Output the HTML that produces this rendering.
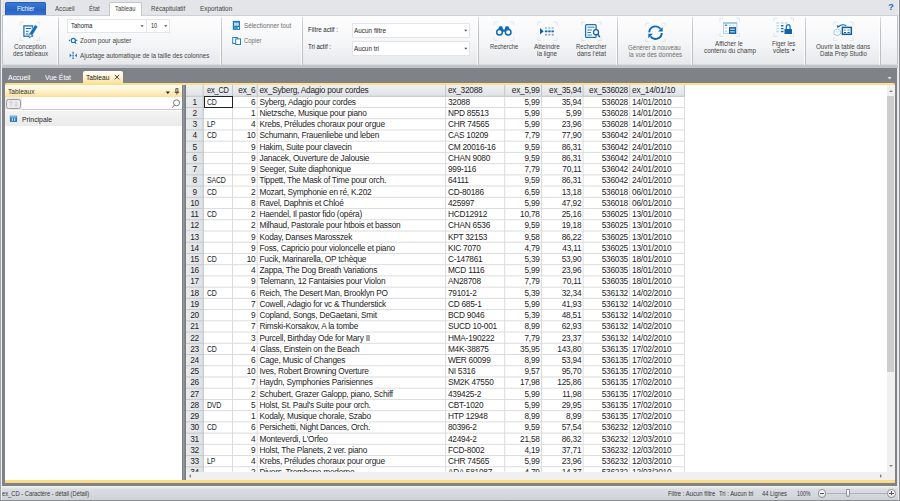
<!DOCTYPE html>
<html lang="fr">
<head>
<meta charset="utf-8">
<title>Tableau</title>
<style>
*{box-sizing:border-box;margin:0;padding:0}
html,body{width:900px;height:501px;overflow:hidden}
body{position:relative;background:#e3e5e8;font-family:"Liberation Sans",sans-serif;font-size:7px;color:#3b3b3b}
.abs{position:absolute}
#winl{left:0;top:0;width:2px;height:501px;background:linear-gradient(90deg,#a0a4a8 0.8px,#eff0f2 0.8px)}
#winr{left:897.8px;top:0;width:2.2px;height:501px;background:linear-gradient(90deg,#eff0f2 1.2px,#8b8f94 1.2px)}
#winb{left:0;top:500px;width:900px;height:1px;background:#8b8f94}
/* ribbon tabs */
.rt{position:absolute;top:2px;height:13px;line-height:13px;text-align:center;font-size:7px;color:#444;white-space:nowrap}
#fichier{left:5px;width:41px;color:#fff;background:linear-gradient(#377ad9,#2a63c0 55%,#2f74dc);border-radius:2px 2px 0 0;border:1px solid #2a5fb5;border-bottom:none;line-height:12px}
#tabact{left:109.2px;width:33px;z-index:1;background:#fdfdfe;border:1px solid #c3c6ca;border-bottom:none;border-radius:2px 2px 0 0;height:14px;line-height:12px}
#help{left:888.300px;top:1.200px;font-size:9px;letter-spacing:-0.500px;line-height:12px;font-weight:bold;color:#1464b4}
/* ribbon */
#ribbon{left:2px;top:14.700px;width:895.8px;height:50.700px;background:linear-gradient(#fdfdfe,#f6f7f8 50%,#e7e9ec);border:1px solid #bfc3c8;border-top-color:#cdd0d4;border-bottom-color:#d9dce0;border-radius:0 0 2px 2px}
.sep{position:absolute;top:16.500px;height:48.500px;width:1px;background:linear-gradient(#d9dbdf,#bcbfc4 30%);box-shadow:-1px 0 0 rgba(255,255,255,.8)}
.t{position:absolute;white-space:nowrap;line-height:10px;height:10px;transform-origin:0 0;z-index:2}
.rc{text-align:center;transform:translateX(-50%)}
.combo{position:absolute;background:#fff;border:1px solid #e3e5e8;height:10px}
.combo span{position:absolute;left:3px;top:0;line-height:8.5px;font-size:6.5px;color:#333}
.combo i{position:absolute;right:3px;top:3.5px;border:1.700px solid transparent;border-top:2.100px solid #444;width:0;height:0}
/* workspace */
#ws{left:2.1px;top:68px;width:895.3px;height:418px;background:#7f8388}
.dt{position:absolute;top:71px;height:12px;line-height:12px;font-size:7.5px;color:#fff;white-space:nowrap}
#dtact{left:82.5px;width:40px;background:linear-gradient(#fffefb,#fdf3d3 50%,#fbe3a0);color:#222;border-radius:2px 2px 0 0;padding-left:3.5px}
#yel{left:5px;top:82.5px;width:890px;height:2.6px;background:#fce08e;border-radius:1.5px 1.5px 0 0}
#yelb{left:5px;top:480px;width:890px;height:2.8px;background:#fbdc85}
/* left panel */
#lp{left:5px;top:85px;width:177.4px;height:395px;background:#fff}
#lph{left:5px;top:85px;width:177.4px;height:12.2px;background:linear-gradient(#fffdf5,#fdefc4 60%,#fbe09a);font-size:7.5px;line-height:12px;padding-left:3px;color:#333}
#lps{left:5px;top:97.2px;width:177.4px;height:13px;background:#fff;border-bottom:1px solid #c9c9c9}
#lpi{left:5px;top:110.5px;width:176.5px;height:15px;background:linear-gradient(#f3f3f3,#ebebeb);font-size:7.5px;line-height:15px;padding-left:16.5px;color:#222}
#split{left:182.5px;top:85px;width:3.3px;height:395px;background:linear-gradient(90deg,#9a9da2,#73777c)}
/* grid */
#grid{left:186px;top:84.9px;width:700.6px;height:386.9px;background:#fff;overflow:hidden;font-size:8.3px;letter-spacing:-0.235px;color:#242424}
.tr{position:absolute;left:0;width:100%;height:11.23px;white-space:nowrap}
.tr>div{position:absolute;top:0;height:11.23px;line-height:10.5px;overflow:hidden;padding:0 2.3px 0 1.8px}
.r{text-align:right}
.c0{left:0;width:17.7px;background:linear-gradient(90deg,#e9ebed,#dfe2e5);text-align:center}
.sq{display:inline-block;transform:scaleX(.84);transform-origin:0 50%}
.c1{padding-left:3px!important;left:17.7px;width:29.3px}
.c2{left:47.0px;width:24.7px}
.c3{left:71.7px;width:188.4px}
.c4{left:260.1px;width:59.1px}
.c5{left:319.2px;width:36.8px}
.c6{left:356.0px;width:41.6px}
.c7{left:397.6px;width:46.7px}
.c8{left:444.3px;width:54.7px}
.th{height:11.87px}
.th>div{height:11.87px;line-height:11.8px;background:linear-gradient(#eef0f2,#dfe2e6)}
#sel{left:203.7px;top:95.9px;width:29.2px;height:11.9px;border:1px solid #222}
#vsb{left:886.6px;top:85px;width:8.4px;height:395px;background:#f0f0f0}
#vth{left:887.3px;top:95.8px;width:6.6px;height:276px;background:#cdcdcd}
#hsb{left:186px;top:471.8px;width:700.6px;height:8.2px;background:#f0f0f0}
.tri{position:absolute;width:0;height:0;border:2.2px solid transparent}
/* status */
#status{left:1px;top:485.8px;width:898px;height:14.2px;background:linear-gradient(#f2f3f5,#d9dce0 25%,#cfd2d7);font-size:6.6px;line-height:13.5px;color:#333}
#status span{position:absolute;white-space:nowrap;top:0}
.circ{position:absolute;width:8.6px;height:8.6px;border-radius:50%;background:linear-gradient(#fff,#e3e5e8);border:1px solid #8d9196}
</style>
</head>
<body>
<!-- ribbon tab strip -->
<div class="rt" id="fichier"></div>
<div class="rt" id="tabact"></div>
<div class="abs" id="help">?</div>

<div class="abs" id="ribbon"></div>
<div class="sep" style="left:57.7px"></div>
<div class="sep" style="left:221.0px"></div>
<div class="sep" style="left:301.8px"></div>
<div class="sep" style="left:478.1px"></div>
<div class="sep" style="left:617.0px"></div>
<div class="sep" style="left:692.0px"></div>
<div class="sep" style="left:804.9px"></div>
<div class="sep" style="left:880.1px"></div>

<!-- group 1 -->

<!-- group 2 -->
<div class="combo" style="left:66.8px;top:19.2px;width:79.9px;height:13.5px"></div>
<div class="combo" style="left:145.7px;top:19.2px;width:24.3px;height:13.5px"></div>

<!-- group 3 -->

<!-- group 4 -->
<div class="combo" style="left:352.3px;top:23.3px;width:117.6px;height:14.6px"></div>
<div class="combo" style="left:352.3px;top:41.4px;width:117.6px;height:14.4px"></div>

<!-- group 5 -->

<!-- group 6 -->

<!-- group 7 -->

<!-- group 8 -->

<!-- workspace -->
<div class="abs" style="left:2px;top:65.400px;width:896px;height:2.800px;background:#c1c4c9"></div>
<div class="abs" id="ws"></div>
<div class="dt" id="dtact"></div>
<div class="abs" id="yel"></div>

<!-- left panel -->
<div class="abs" id="lp"></div>
<div class="abs" id="lph"></div>
<div class="abs" id="lps"></div>
<div class="abs" style="left:5px;top:97.300px;width:17.200px;height:12.800px;background:#ebebeb"></div>
<div class="abs" style="left:6.2px;top:98.800px;width:14.700px;height:10.200px;border:1px solid #9c9c9c;border-radius:2.500px;background:#ececec"></div>
<div class="abs" id="lpi"></div>
<div class="abs" id="split"></div>

<!-- grid -->
<div class="abs" id="grid">
<div class="tr th" style="top:0"><div class="c0"></div><div class="c1"><span class="sq" style="transform:scaleX(.9)">ex_CD</span></div><div class="c2 r">ex_6</div><div class="c3">ex_Syberg, Adagio pour cordes</div><div class="c4">ex_32088</div><div class="c5 r">ex_5,99</div><div class="c6 r">ex_35,94</div><div class="c7 r">ex_536028</div><div class="c8">ex_14/01/10</div></div>
<div class="tr" style="top:11.87px"><div class="c0">1</div><div class="c1"><span class="sq">CD</span></div><div class="c2 r">6</div><div class="c3">Syberg, Adagio pour cordes</div><div class="c4">32088</div><div class="c5 r">5,99</div><div class="c6 r">35,94</div><div class="c7 r">536028</div><div class="c8">14/01/2010</div></div>
<div class="tr" style="top:23.10px"><div class="c0">2</div><div class="c1"></div><div class="c2 r">1</div><div class="c3">Nietzsche, Musique pour piano</div><div class="c4">NPD 85513</div><div class="c5 r">5,99</div><div class="c6 r">5,99</div><div class="c7 r">536028</div><div class="c8">14/01/2010</div></div>
<div class="tr" style="top:34.33px"><div class="c0">3</div><div class="c1"><span class="sq">LP</span></div><div class="c2 r">4</div><div class="c3">Krebs, Préludes choraux pour orgue</div><div class="c4">CHR 74565</div><div class="c5 r">5,99</div><div class="c6 r">23,96</div><div class="c7 r">536028</div><div class="c8">14/01/2010</div></div>
<div class="tr" style="top:45.55px"><div class="c0">4</div><div class="c1"><span class="sq">CD</span></div><div class="c2 r">10</div><div class="c3">Schumann, Frauenliebe und leben</div><div class="c4">CAS 10209</div><div class="c5 r">7,79</div><div class="c6 r">77,90</div><div class="c7 r">536042</div><div class="c8">24/01/2010</div></div>
<div class="tr" style="top:56.78px"><div class="c0">5</div><div class="c1"></div><div class="c2 r">9</div><div class="c3">Hakim, Suite pour clavecin</div><div class="c4">CM 20016-16</div><div class="c5 r">9,59</div><div class="c6 r">86,31</div><div class="c7 r">536042</div><div class="c8">24/01/2010</div></div>
<div class="tr" style="top:68.01px"><div class="c0">6</div><div class="c1"></div><div class="c2 r">9</div><div class="c3">Janacek, Ouverture de Jalousie</div><div class="c4">CHAN 9080</div><div class="c5 r">9,59</div><div class="c6 r">86,31</div><div class="c7 r">536042</div><div class="c8">24/01/2010</div></div>
<div class="tr" style="top:79.24px"><div class="c0">7</div><div class="c1"></div><div class="c2 r">9</div><div class="c3">Seeger, Suite diaphonique</div><div class="c4">999-116</div><div class="c5 r">7,79</div><div class="c6 r">70,11</div><div class="c7 r">536042</div><div class="c8">24/01/2010</div></div>
<div class="tr" style="top:90.47px"><div class="c0">8</div><div class="c1"><span class="sq">SACD</span></div><div class="c2 r">9</div><div class="c3">Tippett, The Mask of Time pour orch.</div><div class="c4">64111</div><div class="c5 r">9,59</div><div class="c6 r">86,31</div><div class="c7 r">536042</div><div class="c8">24/01/2010</div></div>
<div class="tr" style="top:101.69px"><div class="c0">9</div><div class="c1"><span class="sq">CD</span></div><div class="c2 r">2</div><div class="c3">Mozart, Symphonie en ré, K.202</div><div class="c4">CD-80186</div><div class="c5 r">6,59</div><div class="c6 r">13,18</div><div class="c7 r">536018</div><div class="c8">06/01/2010</div></div>
<div class="tr" style="top:112.92px"><div class="c0">10</div><div class="c1"></div><div class="c2 r">8</div><div class="c3">Ravel, Daphnis et Chloé</div><div class="c4">425997</div><div class="c5 r">5,99</div><div class="c6 r">47,92</div><div class="c7 r">536018</div><div class="c8">06/01/2010</div></div>
<div class="tr" style="top:124.15px"><div class="c0">11</div><div class="c1"><span class="sq">CD</span></div><div class="c2 r">2</div><div class="c3">Haendel, Il pastor fido (opéra)</div><div class="c4">HCD12912</div><div class="c5 r">10,78</div><div class="c6 r">25,16</div><div class="c7 r">536025</div><div class="c8">13/01/2010</div></div>
<div class="tr" style="top:135.38px"><div class="c0">12</div><div class="c1"></div><div class="c2 r">2</div><div class="c3">Milhaud, Pastorale pour htbois et basson</div><div class="c4">CHAN 6536</div><div class="c5 r">9,59</div><div class="c6 r">19,18</div><div class="c7 r">536025</div><div class="c8">13/01/2010</div></div>
<div class="tr" style="top:146.61px"><div class="c0">13</div><div class="c1"></div><div class="c2 r">9</div><div class="c3">Koday, Danses Marosszek</div><div class="c4">KPT 32153</div><div class="c5 r">9,58</div><div class="c6 r">86,22</div><div class="c7 r">536025</div><div class="c8">13/01/2010</div></div>
<div class="tr" style="top:157.83px"><div class="c0">14</div><div class="c1"></div><div class="c2 r">9</div><div class="c3">Foss, Capricio pour violoncelle et piano</div><div class="c4">KIC 7070</div><div class="c5 r">4,79</div><div class="c6 r">43,11</div><div class="c7 r">536025</div><div class="c8">13/01/2010</div></div>
<div class="tr" style="top:169.06px"><div class="c0">15</div><div class="c1"><span class="sq">CD</span></div><div class="c2 r">10</div><div class="c3">Fucik, Marinarella, OP tchèque</div><div class="c4">C-147861</div><div class="c5 r">5,39</div><div class="c6 r">53,90</div><div class="c7 r">536035</div><div class="c8">18/01/2010</div></div>
<div class="tr" style="top:180.29px"><div class="c0">16</div><div class="c1"></div><div class="c2 r">4</div><div class="c3">Zappa, The Dog Breath Variations</div><div class="c4">MCD 1116</div><div class="c5 r">5,99</div><div class="c6 r">23,96</div><div class="c7 r">536035</div><div class="c8">18/01/2010</div></div>
<div class="tr" style="top:191.52px"><div class="c0">17</div><div class="c1"></div><div class="c2 r">9</div><div class="c3">Telemann, 12 Fantaisies pour Violon</div><div class="c4">AN28708</div><div class="c5 r">7,79</div><div class="c6 r">70,11</div><div class="c7 r">536035</div><div class="c8">18/01/2010</div></div>
<div class="tr" style="top:202.75px"><div class="c0">18</div><div class="c1"><span class="sq">CD</span></div><div class="c2 r">6</div><div class="c3">Reich, The Desert Man, Brooklyn PO</div><div class="c4">79101-2</div><div class="c5 r">5,39</div><div class="c6 r">32,34</div><div class="c7 r">536132</div><div class="c8">14/02/2010</div></div>
<div class="tr" style="top:213.97px"><div class="c0">19</div><div class="c1"></div><div class="c2 r">7</div><div class="c3">Cowell, Adagio for vc &amp; Thunderstick</div><div class="c4">CD 685-1</div><div class="c5 r">5,99</div><div class="c6 r">41,93</div><div class="c7 r">536132</div><div class="c8">14/02/2010</div></div>
<div class="tr" style="top:225.20px"><div class="c0">20</div><div class="c1"></div><div class="c2 r">9</div><div class="c3">Copland, Songs, DeGaetani, Smit</div><div class="c4">BCD 9046</div><div class="c5 r">5,39</div><div class="c6 r">48,51</div><div class="c7 r">536132</div><div class="c8">14/02/2010</div></div>
<div class="tr" style="top:236.43px"><div class="c0">21</div><div class="c1"></div><div class="c2 r">7</div><div class="c3">Rimski-Korsakov, A la tombe</div><div class="c4">SUCD 10-001</div><div class="c5 r">8,99</div><div class="c6 r">62,93</div><div class="c7 r">536132</div><div class="c8">14/02/2010</div></div>
<div class="tr" style="top:247.66px"><div class="c0">22</div><div class="c1"></div><div class="c2 r">3</div><div class="c3">Purcell, Birthday Ode for Mary II</div><div class="c4">HMA-190222</div><div class="c5 r">7,79</div><div class="c6 r">23,37</div><div class="c7 r">536132</div><div class="c8">14/02/2010</div></div>
<div class="tr" style="top:258.89px"><div class="c0">23</div><div class="c1"><span class="sq">CD</span></div><div class="c2 r">4</div><div class="c3">Glass, Einstein on the Beach</div><div class="c4">M4K-38875</div><div class="c5 r">35,95</div><div class="c6 r">143,80</div><div class="c7 r">536135</div><div class="c8">17/02/2010</div></div>
<div class="tr" style="top:270.11px"><div class="c0">24</div><div class="c1"></div><div class="c2 r">6</div><div class="c3">Cage, Music of Changes</div><div class="c4">WER 60099</div><div class="c5 r">8,99</div><div class="c6 r">53,94</div><div class="c7 r">536135</div><div class="c8">17/02/2010</div></div>
<div class="tr" style="top:281.34px"><div class="c0">25</div><div class="c1"></div><div class="c2 r">10</div><div class="c3">Ives, Robert Browning Overture</div><div class="c4">NI 5316</div><div class="c5 r">9,57</div><div class="c6 r">95,70</div><div class="c7 r">536135</div><div class="c8">17/02/2010</div></div>
<div class="tr" style="top:292.57px"><div class="c0">26</div><div class="c1"></div><div class="c2 r">7</div><div class="c3">Haydn, Symphonies Parisiennes</div><div class="c4">SM2K 47550</div><div class="c5 r">17,98</div><div class="c6 r">125,86</div><div class="c7 r">536135</div><div class="c8">17/02/2010</div></div>
<div class="tr" style="top:303.80px"><div class="c0">27</div><div class="c1"></div><div class="c2 r">2</div><div class="c3">Schubert, Grazer Galopp, piano, Schiff</div><div class="c4">439425-2</div><div class="c5 r">5,99</div><div class="c6 r">11,98</div><div class="c7 r">536135</div><div class="c8">17/02/2010</div></div>
<div class="tr" style="top:315.03px"><div class="c0">28</div><div class="c1"><span class="sq">DVD</span></div><div class="c2 r">5</div><div class="c3">Holst, St. Paul's Suite pour orch.</div><div class="c4">CBT-1020</div><div class="c5 r">5,99</div><div class="c6 r">29,95</div><div class="c7 r">536135</div><div class="c8">17/02/2010</div></div>
<div class="tr" style="top:326.25px"><div class="c0">29</div><div class="c1"></div><div class="c2 r">1</div><div class="c3">Kodaly, Musique chorale, Szabo</div><div class="c4">HTP 12948</div><div class="c5 r">8,99</div><div class="c6 r">8,99</div><div class="c7 r">536135</div><div class="c8">17/02/2010</div></div>
<div class="tr" style="top:337.48px"><div class="c0">30</div><div class="c1"><span class="sq">CD</span></div><div class="c2 r">6</div><div class="c3">Persichetti, Night Dances, Orch.</div><div class="c4">80396-2</div><div class="c5 r">9,59</div><div class="c6 r">57,54</div><div class="c7 r">536232</div><div class="c8">12/03/2010</div></div>
<div class="tr" style="top:348.71px"><div class="c0">31</div><div class="c1"></div><div class="c2 r">4</div><div class="c3">Monteverdi, L'Orfeo</div><div class="c4">42494-2</div><div class="c5 r">21,58</div><div class="c6 r">86,32</div><div class="c7 r">536232</div><div class="c8">12/03/2010</div></div>
<div class="tr" style="top:359.94px"><div class="c0">32</div><div class="c1"></div><div class="c2 r">9</div><div class="c3">Holst, The Planets, 2 ver. piano</div><div class="c4">FCD-8002</div><div class="c5 r">4,19</div><div class="c6 r">37,71</div><div class="c7 r">536232</div><div class="c8">12/03/2010</div></div>
<div class="tr" style="top:371.17px"><div class="c0">33</div><div class="c1"><span class="sq">LP</span></div><div class="c2 r">4</div><div class="c3">Krebs, Préludes choraux pour orgue</div><div class="c4">CHR 74565</div><div class="c5 r">5,99</div><div class="c6 r">23,96</div><div class="c7 r">536232</div><div class="c8">12/03/2010</div></div>
<div class="tr" style="top:382.39px"><div class="c0">34</div><div class="c1"></div><div class="c2 r">2</div><div class="c3">Divers, Trombone moderne</div><div class="c4">ADA 581087</div><div class="c5 r">4,79</div><div class="c6 r">14,37</div><div class="c7 r">536232</div><div class="c8">12/03/2010</div></div>
</div>
<svg class="abs" style="left:0;top:0" width="900" height="501" viewBox="0 0 900 501"><defs><clipPath id="gc"><rect x="186" y="84.9" width="700.6" height="386.9"/></clipPath></defs><g clip-path="url(#gc)" fill="none" stroke-width="1"><path d="M203.7 107.50H685M203.7 118.73H685M203.7 129.95H685M203.7 141.18H685M203.7 152.41H685M203.7 163.64H685M203.7 174.87H685M203.7 186.09H685M203.7 197.32H685M203.7 208.55H685M203.7 219.78H685M203.7 231.01H685M203.7 242.23H685M203.7 253.46H685M203.7 264.69H685M203.7 275.92H685M203.7 287.15H685M203.7 298.37H685M203.7 309.60H685M203.7 320.83H685M203.7 332.06H685M203.7 343.29H685M203.7 354.51H685M203.7 365.74H685M203.7 376.97H685M203.7 388.20H685M203.7 399.43H685M203.7 410.65H685M203.7 421.88H685M203.7 433.11H685M203.7 444.34H685M203.7 455.57H685M203.7 466.79H685M203.7 478.02H685" stroke="#dcdcdc"/><path d="M186 107.50H203.7M186 118.73H203.7M186 129.95H203.7M186 141.18H203.7M186 152.41H203.7M186 163.64H203.7M186 174.87H203.7M186 186.09H203.7M186 197.32H203.7M186 208.55H203.7M186 219.78H203.7M186 231.01H203.7M186 242.23H203.7M186 253.46H203.7M186 264.69H203.7M186 275.92H203.7M186 287.15H203.7M186 298.37H203.7M186 309.60H203.7M186 320.83H203.7M186 332.06H203.7M186 343.29H203.7M186 354.51H203.7M186 365.74H203.7M186 376.97H203.7M186 388.20H203.7M186 399.43H203.7M186 410.65H203.7M186 421.88H203.7M186 433.11H203.7M186 444.34H203.7M186 455.57H203.7M186 466.79H203.7M186 478.02H203.7" stroke="#c6c9cd"/><path d="M232.5 96.27V472M257.2 96.27V472M445.6 96.27V472M504.7 96.27V472M541.5 96.27V472M583.1 96.27V472M629.8 96.27V472M684.5 96.27V472" stroke="#dcdcdc"/><path d="M232.5 84.9V96.27M257.2 84.9V96.27M445.6 84.9V96.27M504.7 84.9V96.27M541.5 84.9V96.27M583.1 84.9V96.27M629.8 84.9V96.27M684.5 84.9V96.27" stroke="#c3c6ca"/><path d="M203.2 84.9V472M186 96.27H685" stroke="#c3c6ca"/></g></svg>
<div class="abs" id="sel"></div>
<div class="abs" id="vsb"></div>
<div class="abs" id="vth"></div>
<div class="tri" style="left:888.6px;top:87.6px;border-bottom:2.6px solid #858585"></div>
<div class="tri" style="left:888.6px;top:465px;border-top:2.6px solid #858585"></div>
<div class="abs" id="hsb"></div>
<div class="tri" style="left:186.6px;top:473.7px;border-right:2.4px solid #858585"></div>
<div class="tri" style="left:880px;top:473.7px;border-left:2.4px solid #858585"></div>
<div class="abs" id="yelb"></div>

<!-- status bar -->
<div class="abs" id="status">
</div>
<div class="abs" style="left:827px;top:493px;width:60px;height:1px;background:#aeb2b7"></div>
<div class="circ" style="left:817.7px;top:489px"></div>
<div class="abs" style="left:819.8px;top:492.8px;width:4.4px;height:1px;background:#555"></div>
<div class="circ" style="left:887.3px;top:489px"></div>
<div class="abs" style="left:889.4px;top:492.8px;width:4.4px;height:1px;background:#555"></div>
<div class="abs" style="left:891.1px;top:491.1px;width:1px;height:4.4px;background:#555"></div>
<div class="abs" style="left:845.5px;top:489px;width:4.4px;height:8px;background:linear-gradient(#fff,#e4e6e9);border:1px solid #90949a;border-radius:1px 1px 2.5px 2.5px"></div>

<div class="abs" id="winl"></div>
<div class="abs" id="winr"></div>
<div class="abs" id="winb"></div>
<svg class="abs" style="left:0;top:0" width="900" height="501" viewBox="0 0 900 501">
<!-- brackets -->
<path d="M20.2 25.5v-3.300h3.500M36.2 22.2h3.500v3.300M39.7 37.2v3.300h-3.500M23.7 40.5h-3.500v-3.300" fill="none" stroke="#d6e3f2" stroke-width=".9"/>
<path d="M494.2 25.5v-3.300h3.500M510.2 22.2h3.500v3.300M513.7 37.2v3.300h-3.500M497.7 40.5h-3.500v-3.300" fill="none" stroke="#d6e3f2" stroke-width=".9"/>
<path d="M537.7 25.5v-3.300h3.500M553.7 22.2h3.500v3.300M557.2 37.2v3.300h-3.500M541.2 40.5h-3.500v-3.300" fill="none" stroke="#d6e3f2" stroke-width=".9"/>
<path d="M581.7 25.5v-3.300h3.500M597.7 22.2h3.500v3.300M601.2 37.2v3.300h-3.500M585.2 40.5h-3.500v-3.300" fill="none" stroke="#d6e3f2" stroke-width=".9"/>
<path d="M645.7 26.5v-3.300h3.500M661.7 23.2h3.500v3.300M665.2 38.2v3.300h-3.500M649.2 41.5h-3.500v-3.300" fill="none" stroke="#d6e3f2" stroke-width=".9"/>
<path d="M720.0 21.5v-3.300h3.500M736.0 18.2h3.500v3.300M739.5 33.2v3.300h-3.500M723.5 36.5h-3.500v-3.300" fill="none" stroke="#d6e3f2" stroke-width=".9"/>
<path d="M774.0 21.5v-3.300h3.500M790.0 18.2h3.500v3.300M793.5 33.2v3.300h-3.500M777.5 36.5h-3.500v-3.300" fill="none" stroke="#d6e3f2" stroke-width=".9"/>
<path d="M833.7 25.5v-3.300h3.500M849.7 22.2h3.500v3.300M853.2 37.2v3.300h-3.500M837.2 40.5h-3.500v-3.300" fill="none" stroke="#d6e3f2" stroke-width=".9"/>
<!-- conception -->
<rect x="23.9" y="25.900" width="8.6" height="10.300" fill="#fff" stroke="#2a7dbb" stroke-width="1.400"/>
<path d="M25.800 28.500h5M25.800 31.200h2.800M25.800 34h2.600" stroke="#1767ab" stroke-width="1.100"/>
<path d="M35 24.700l2.900 1.900-5.700 8.900-2.900-1.900z" fill="#0f6cb5" stroke="#fff" stroke-width=".5"/>
<path d="M29.300 33.600l2.900 1.900-3.200 2.600z" fill="#fff" stroke="#0f6cb5" stroke-width=".6"/>
<path d="M29 38.100l.3-1.500 1 .7z" fill="#0f6cb5"/>
<!-- zoom -->
<circle cx="73.300" cy="40.400" r="2.100" fill="#fff" stroke="#1a72b8" stroke-width="1.200"/>
<path d="M74.800 42l1.300 1.700" stroke="#1a72b8" stroke-width="1.200"/>
<path d="M68.900 40.400h1.100M76.200 40.400h1.100" stroke="#1a72b8" stroke-width="1.100"/>
<!-- autofit -->
<path d="M69.700 53.600l2 1.800-2 1.800zM76.900 53.600l-2 1.800 2 1.800z" fill="#1a72b8"/>
<path d="M72.200 52.300h1.800M72.200 53.800h1.800M72.200 55.400h1.800M72.200 57h1.800M72.200 58.500h1.800" stroke="#1a72b8" stroke-width=".8"/>
<!-- select all -->
<rect x="232.800" y="20.900" width="7.200" height="9" fill="#1e7ab8"/>
<rect x="234" y="22.600" width="4.800" height="3.200" fill="#b7d6ec"/>
<rect x="237.700" y="27" width="1.300" height="2" fill="#fff"/>
<rect x="234" y="27.200" width="2.600" height="1.600" fill="#5fa3d3"/>
<!-- copy -->
<rect x="232.700" y="37.500" width="4.900" height="6" fill="#fff" stroke="#2a7fbd" stroke-width="1"/>
<rect x="235.700" y="38.900" width="4.800" height="5.600" fill="#fff" stroke="#2a7fbd" stroke-width="1"/>
<!-- binoculars -->
<path d="M499.500 26.300h2.700l1 3.300h1.400l1-3.300h2.700l2.700 5.500h-14.200z" fill="#0f6cb5"/>
<circle cx="499.500" cy="32.200" r="2.800" fill="#fff" stroke="#0f6cb5" stroke-width="1.500"/>
<circle cx="508.200" cy="32.200" r="2.800" fill="#fff" stroke="#0f6cb5" stroke-width="1.500"/>
<!-- goto line -->
<path d="M540 28v6.500l3.700-3.300z" fill="#0f5ea5"/>
<g fill="#a6cbe8"><rect x="545" y="27" width="2" height="2"/><rect x="548.300" y="27" width="2" height="2"/><rect x="551.700" y="27" width="2" height="2"/></g>
<rect x="544.700" y="30.300" width="9.300" height="2" fill="#9cc5e6"/>
<g fill="#0f6cb5"><rect x="544.900" y="30.500" width="2.300" height="1.700" rx=".8"/><rect x="548.200" y="30.500" width="2.300" height="1.700" rx=".8"/><rect x="551.600" y="30.500" width="2.300" height="1.700" rx=".8"/></g>
<g fill="#93a3b1"><rect x="545" y="33.800" width="2" height="1.800"/><rect x="548.300" y="33.800" width="2" height="1.800"/><rect x="551.700" y="33.800" width="2" height="1.800"/></g>
<!-- search doc -->
<rect x="585.600" y="24.600" width="10.500" height="12.800" rx="1" fill="#fff" stroke="#1a72b5" stroke-width="1.300"/>
<path d="M587.300 27.200h7.200M587.300 30h4.600M587.300 32.500h3.800M587.300 35h4.600" stroke="#2a7dbd" stroke-width="1"/>
<circle cx="596" cy="32.200" r="2.500" fill="#fff" stroke="#0f62a8" stroke-width="1.300"/>
<path d="M597.800 34.300l2 2.800" stroke="#0f62a8" stroke-width="1.500"/>
<!-- refresh -->
<path d="M649.200 32.400a6.300 6.300 0 0 1 11.300-3.500" fill="none" stroke="#0f6cb5" stroke-width="1.900"/>
<path d="M661.800 33a6.300 6.300 0 0 1-11.300 3.500" fill="none" stroke="#0f5fa3" stroke-width="1.900"/>
<path d="M662.700 27.200v4.400h-4.700zM648.300 38.200v-4.400h4.700z" fill="#0f6cb5"/>
<!-- field content -->
<rect x="723.500" y="22.500" width="13.300" height="10.800" fill="#fff" stroke="#a9cce8" stroke-width="1"/>
<path d="M723.500 23.300h13.300" stroke="#8fbde0" stroke-width="1"/>
<rect x="724.800" y="24.600" width="2.400" height="1.200" fill="#1a72b8"/>
<path d="M729.200 25.200h1.800M732.200 25.200h2.600" stroke="#b7d6ec" stroke-width="1"/>
<rect x="725" y="27.200" width="2" height="1.600" fill="#c3dcf0"/><rect x="725" y="30.200" width="2" height="1.800" fill="#c3dcf0"/>
<rect x="729" y="27.100" width="7" height="6.800" fill="#0f5fa3"/>
<path d="M730.200 29.200h4.600" stroke="#fff" stroke-width="1"/><rect x="730.200" y="31" width="4.600" height="1.500" fill="#9cc5e6"/>
<!-- lock -->
<g fill="#b9d7ee"><rect x="776.300" y="22.300" width="2.800" height="1.400"/><rect x="780.800" y="22.300" width="2.800" height="1.400"/><rect x="784.800" y="22.300" width="2.800" height="1.400"/><rect x="776.300" y="25" width="2.800" height="1.400"/><rect x="776.300" y="27.900" width="2.800" height="1.400"/><rect x="776.300" y="30.800" width="2.800" height="1.400"/></g>
<g fill="#1470b8"><rect x="780.800" y="25" width="2.800" height="1.400" rx=".6"/><rect x="780.800" y="27.900" width="2.800" height="1.400" rx=".6"/><rect x="780.800" y="30.800" width="2.800" height="1.400" rx=".6"/></g>
<path d="M786.300 29.500v-2.700a1.900 2.100 0 0 1 3.800 0v2.700" fill="#fff" stroke="#2a7fc0" stroke-width="1.400"/>
<rect x="784.500" y="29" width="7.500" height="5" rx=".5" fill="#0d62a8"/>
<!-- dps -->
<rect x="842.400" y="27.400" width="8.900" height="6.900" fill="#fff" stroke="#0f5fa3" stroke-width="1.500"/>
<rect x="844" y="29.200" width="1.800" height="1.800" fill="#8fbde0"/><rect x="847.500" y="29.200" width="2" height="1.800" fill="#8fbde0"/>
<path d="M844 32.500h2M847.500 32.500h2.200" stroke="#0f5fa3" stroke-width="1"/>
<path d="M834 30.500l3.200-1.600 3.200 1.600v3.600l-3.200 1.600-3.200-1.600z" fill="#fff" stroke="#a5c8e6" stroke-width="1"/>
<path d="M834 30.500l3.200 1.500 3.200-1.500M837.200 32v3.600" fill="none" stroke="#c3dcf0" stroke-width=".7"/>
<path d="M838.600 26.600a5 4 0 0 1 7.600-.8" fill="none" stroke="#1a72b8" stroke-width="1.200"/>
<path d="M836.900 25l.5 3 2.400-1.600z" fill="#0f5fa3"/>
<!-- combo arrows -->
<path d="M140.500 25.200h3.200l-1.600 1.900zM164.200 25.200h3.200l-1.600 1.900zM464.200 29.700h3.200l-1.600 1.900zM464.200 47.700h3.200l-1.600 1.900z" fill="#444"/>
<!-- volets arrow -->
<path d="M791.700 49.300h3.200l-1.600 1.900z" fill="#333"/>
<!-- doc tab close -->
<path d="M114.800 74.800l4.400 4.600M119.200 74.800l-4.400 4.600" stroke="#333" stroke-width=".9"/>
<!-- ws dropdown -->
<path d="M887.500 77.100h4.200l-2.100 2.400z" fill="#dedede"/>
<!-- panel header icons -->
<path d="M165.700 91.400h4.200l-2.100 2.500z" fill="#222"/>
<rect x="175.900" y="88.700" width="2" height="3.500" fill="#fdf0c8" stroke="#333" stroke-width=".8"/>
<path d="M174.600 92.300h4.600M176.900 92.300v2.300" stroke="#333" stroke-width=".8"/>
<!-- search icon -->
<circle cx="176.500" cy="102.800" r="3" fill="none" stroke="#777" stroke-width="1"/>
<path d="M174.600 104.900l-2.300 2.800" stroke="#7a7a7a" stroke-width="1"/>
<!-- sort btn arrows -->
<path d="M11 101.200v5M9.500 102.800l1.500-1.600 1.500 1.600M16.100 101.200v5M14.600 104.600l1.500 1.600 1.500-1.600" fill="none" stroke="#c4c4c4" stroke-width=".8"/>
<!-- principale icon -->
<rect x="9.900" y="115.700" width="7.200" height="6.200" fill="#2a7ab5"/>
<rect x="10.400" y="116.200" width="6.200" height="1.300" fill="#9cc5e0"/>
<path d="M12.300 118.200v2.600M14.700 118.200v2.600" stroke="#e8f1f8" stroke-width="1"/>
</svg>

<div class="t" style="left:16.5px;top:3.5px;font-size:6.6px;transform:scaleX(0.874);color:#fff;">Fichier</div>
<div class="t" style="left:55.1px;top:3.5px;font-size:6.6px;transform:scaleX(0.926);color:#454545;">Accueil</div>
<div class="t" style="left:89.4px;top:3.5px;font-size:6.6px;transform:scaleX(0.912);color:#454545;">État</div>
<div class="t" style="left:115.1px;top:3.5px;font-size:6.6px;transform:scaleX(0.887);color:#454545;">Tableau</div>
<div class="t" style="left:151.1px;top:3.5px;font-size:6.6px;transform:scaleX(0.942);color:#454545;">Récapitulatif</div>
<div class="t" style="left:199.8px;top:3.5px;font-size:6.6px;transform:scaleX(0.965);color:#454545;">Exportation</div>
<div class="t" style="left:13.5px;top:42.0px;font-size:7px;transform:scaleX(0.906);color:#454545;">Conception</div>
<div class="t" style="left:12.6px;top:48.9px;font-size:7px;transform:scaleX(0.884);color:#454545;">des tableaux</div>
<div class="t" style="left:70.5px;top:21.0px;font-size:6.8px;transform:scaleX(0.885);color:#262626;">Tahoma</div>
<div class="t" style="left:150.6px;top:21.0px;font-size:6.8px;transform:scaleX(0.820);color:#262626;">10</div>
<div class="t" style="left:80.4px;top:35.7px;font-size:7px;transform:scaleX(0.905);color:#454545;">Zoom pour ajuster</div>
<div class="t" style="left:80.4px;top:50.6px;font-size:7px;transform:scaleX(0.896);color:#454545;">Ajustage automatique de la taille des colonnes</div>
<div class="t" style="left:243.7px;top:21.1px;font-size:7px;transform:scaleX(0.900);color:#707070;">Sélectionner tout</div>
<div class="t" style="left:243.7px;top:35.6px;font-size:7px;transform:scaleX(0.844);color:#707070;">Copier</div>
<div class="t" style="left:307.9px;top:24.7px;font-size:7px;transform:scaleX(0.873);color:#262626;">Filtre actif :</div>
<div class="t" style="left:307.9px;top:42.4px;font-size:7px;transform:scaleX(0.862);color:#262626;">Tri actif :</div>
<div class="t" style="left:353.9px;top:25.6px;font-size:7px;transform:scaleX(0.913);color:#262626;">Aucun filtre</div>
<div class="t" style="left:353.9px;top:43.6px;font-size:7px;transform:scaleX(0.901);color:#262626;">Aucun tri</div>
<div class="t" style="left:489.6px;top:41.8px;font-size:7px;transform:scaleX(0.833);color:#454545;">Recherche</div>
<div class="t" style="left:534.1px;top:41.8px;font-size:7px;transform:scaleX(0.920);color:#454545;">Atteindre</div>
<div class="t" style="left:536.8px;top:48.9px;font-size:7px;transform:scaleX(0.906);color:#454545;">la ligne</div>
<div class="t" style="left:575.8px;top:41.8px;font-size:7px;transform:scaleX(0.843);color:#454545;">Rechercher</div>
<div class="t" style="left:576.8px;top:48.9px;font-size:7px;transform:scaleX(0.912);color:#454545;">dans l'état</div>
<div class="t" style="left:628.0px;top:42.9px;font-size:7px;transform:scaleX(0.875);color:#707070;">Générer à nouveau</div>
<div class="t" style="left:628.6px;top:49.9px;font-size:7px;transform:scaleX(0.875);color:#707070;">la vue des données</div>
<div class="t" style="left:715.3px;top:38.7px;font-size:7px;transform:scaleX(0.897);color:#454545;">Afficher le</div>
<div class="t" style="left:703.5px;top:45.6px;font-size:7px;transform:scaleX(0.903);color:#454545;">contenu du champ</div>
<div class="t" style="left:771.7px;top:38.7px;font-size:7px;transform:scaleX(0.868);color:#454545;">Figer les</div>
<div class="t" style="left:772.9px;top:45.6px;font-size:7px;transform:scaleX(0.896);color:#454545;">volets</div>
<div class="t" style="left:815.8px;top:41.8px;font-size:7px;transform:scaleX(0.891);color:#454545;">Ouvrir la table dans</div>
<div class="t" style="left:819.5px;top:48.8px;font-size:7px;transform:scaleX(0.880);color:#454545;">Data Prep Studio</div>
<div class="t" style="left:8.0px;top:72.6px;font-size:7.5px;transform:scaleX(0.926);color:#fff;">Accueil</div>
<div class="t" style="left:45.3px;top:72.6px;font-size:7.5px;transform:scaleX(0.912);color:#fff;">Vue État</div>
<div class="t" style="left:86.2px;top:72.6px;font-size:7.5px;transform:scaleX(0.890);color:#262626;">Tableau</div>
<div class="t" style="left:8.0px;top:86.7px;font-size:7.5px;transform:scaleX(0.882);color:#333;">Tableaux</div>
<div class="t" style="left:21.8px;top:115.0px;font-size:7.5px;transform:scaleX(0.911);color:#262626;">Principale</div>
<div class="t" style="left:1.8px;top:488.8px;font-size:6.6px;transform:scaleX(0.875);color:#3a3a3a;">ex_CD - Caractère - détail (Détail)</div>
<div class="t" style="left:668.4px;top:488.8px;font-size:6.6px;transform:scaleX(0.898);color:#3a3a3a;">Filtre : Aucun filtre</div>
<div class="t" style="left:718.8px;top:488.8px;font-size:6.6px;transform:scaleX(0.891);color:#3a3a3a;">Tri : Aucun tri</div>
<div class="t" style="left:761.8px;top:488.8px;font-size:6.6px;transform:scaleX(0.874);color:#3a3a3a;">44 Lignes</div>
<div class="t" style="left:796.8px;top:488.8px;font-size:6.6px;transform:scaleX(0.806);color:#3a3a3a;">100%</div>
</body>
</html>
